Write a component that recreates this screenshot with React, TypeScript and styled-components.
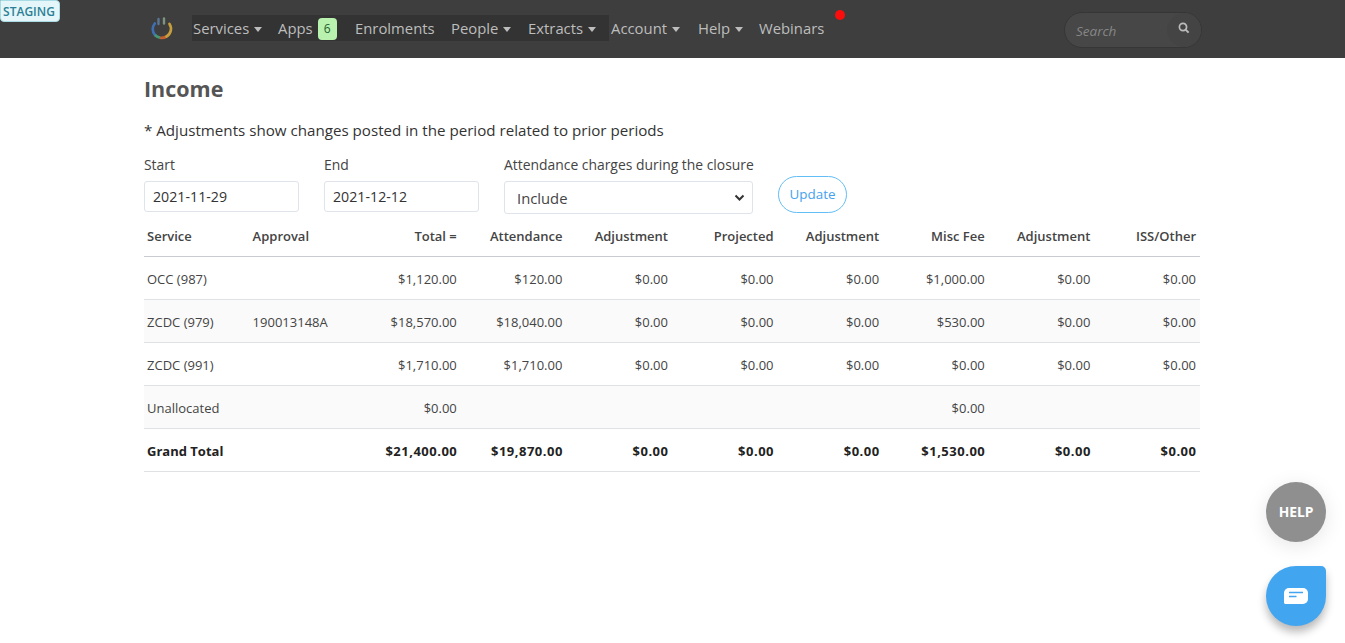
import React from "react";
import styled, { createGlobalStyle } from "styled-components";

const Global = createGlobalStyle`
  html, body { margin: 0; padding: 0; background: #fff; }
  body { font-family: "Open Sans", "Noto Sans", "Liberation Sans", sans-serif; color: #333; overflow: hidden; }
`;

const Page = styled.div`
  position: relative;
  width: 1345px;
  height: 643px;
  overflow: hidden;
`;

const Header = styled.header`
  height: 58px;
  background: #3e3e3e;
  display: flex;
  align-items: flex-start;
  padding-left: 149px;
  box-sizing: border-box;
`;

const StagingBadge = styled.div`
  position: absolute;
  left: 0;
  top: 0;
  width: 60px;
  height: 22px;
  box-sizing: border-box;
  padding-right: 2px;
  background: #e4f6f9;
  border: 1px solid #a9dbe4;
  border-radius: 0 4px 4px 4px;
  color: #2b8096;
  font-size: 12px;
  font-weight: 600;
  line-height: 21px;
  text-align: center;
  white-space: nowrap;
`;

const LogoBox = styled.div`
  width: 26px;
  height: 28px;
  margin-top: 15px;
  margin-right: 17px;
`;

const NavStrip = styled.nav`
  display: flex;
  margin-top: 15px;
  background: #333;
  height: 26px;
  padding-left: 1px;
  width: 417px;
  box-sizing: border-box;
`;

const NavRest = styled.nav`
  display: flex;
  margin-top: 15px;
  margin-left: 2px;
  height: 26px;
`;

const NavItem = styled.a<{ $w: number }>`
  display: flex;
  align-items: center;
  width: ${(p) => p.$w}px;
  height: 26px;
  color: #bdbdbd;
  font-size: 14.85px;
  white-space: nowrap;
`;

const Caret = styled.span`
  display: inline-block;
  width: 0;
  height: 0;
  margin-left: 5px;
  margin-top: 2px;
  border-left: 4px solid transparent;
  border-right: 4px solid transparent;
  border-top: 5px solid #bdbdbd;
`;

const AppsBadge = styled.span`
  display: inline-block;
  width: 19px;
  height: 22px;
  margin-left: 5px;
  margin-top: 2px;
  border-radius: 4px;
  background: #b9f2ae;
  color: #1d5e2c;
  font-size: 12px;
  line-height: 22px;
  text-align: center;
`;

const RedDot = styled.span`
  position: absolute;
  left: 835px;
  top: 10px;
  width: 10px;
  height: 10px;
  border-radius: 50%;
  background: #fb0d0d;
`;

const SearchBox = styled.div`
  position: absolute;
  left: 1064px;
  top: 12px;
  width: 138px;
  height: 36px;
  box-sizing: border-box;
  border-radius: 18px;
  background: #474747;
  border: 1px solid #363636;
  display: flex;
  align-items: center;
  justify-content: space-between;
  padding: 2px 0 0 11px;
  color: #868686;
  font-size: 13.5px;
  font-style: italic;
`;

const SearchIconWrap = styled.span`
  width: 34px;
  height: 34px;
  margin-top: -2px;
  border-radius: 50%;
  background: #444;
  display: flex;
  align-items: center;
  justify-content: center;
  padding: 0 0 4px 0;
  box-sizing: border-box;
`;

const Main = styled.main`
  width: 1056px;
  margin-left: 144px;
`;

const Title = styled.h1`
  margin: 16px 0 0;
  height: 29px;
  font-size: 21.5px;
  line-height: 29px;
  font-weight: 700;
  color: #555;
`;

const Note = styled.p`
  margin: 16px 0 0;
  height: 22px;
  font-size: 15.15px;
  line-height: 22px;
  color: #333;
`;

const FormRow = styled.form`
  display: flex;
  align-items: flex-start;
  margin-top: 15px;
  height: 59px;
`;

const Field = styled.div<{ $w: number; $mr: number }>`
  width: ${(p) => p.$w}px;
  margin-right: ${(p) => p.$mr}px;
`;

const Label = styled.label`
  display: block;
  font-size: 13.9px;
  line-height: 18px;
  color: #444;
  font-weight: 500;
  white-space: nowrap;
`;

const DateInput = styled.div`
  margin-top: 7px;
  height: 31px;
  box-sizing: border-box;
  border: 1px solid #dfe3ea;
  border-radius: 3px;
  padding-left: 8px;
  font-size: 14.2px;
  line-height: 29px;
  color: #333;
`;

const Select = styled.div`
  margin-top: 7px;
  height: 33px;
  box-sizing: border-box;
  border: 1px solid #dfe3ea;
  border-radius: 3px;
  padding: 0 7px 0 12px;
  font-size: 14.8px;
  color: #444;
  display: flex;
  align-items: center;
  justify-content: space-between;
`;

const UpdateButton = styled.button`
  margin-top: 20px;
  width: 69px;
  height: 37px;
  padding: 0 0 2px;
  box-sizing: border-box;
  background: #fff;
  border: 1px solid #63bdf6;
  border-radius: 19px;
  color: #43a2ee;
  font-family: inherit;
  font-size: 13.4px;
`;

const Table = styled.table`
  width: 1056px;
  border-collapse: collapse;
  table-layout: fixed;
`;

const Th = styled.th<{ $left?: boolean }>`
  height: 41px;
  padding: 1px 4px 0 3px;
  box-sizing: border-box;
  border-bottom: 1px solid #c9cbd3;
  text-align: ${(p) => (p.$left ? "left" : "right")};
  font-size: 13px;
  font-weight: 600;
  color: #444;
  white-space: nowrap;
`;

const Tr = styled.tr<{ $alt?: boolean }>`
  background: ${(p) => (p.$alt ? "#fafafa" : "#fff")};
`;

const Td = styled.td<{ $left?: boolean; $bold?: boolean }>`
  height: 43px;
  padding: 3px ${(p) => (p.$bold && !p.$left ? "3.5px" : "4px")} 0 3px;
  box-sizing: border-box;
  border-bottom: 1px solid #dfe1e5;
  text-align: ${(p) => (p.$left ? "left" : "right")};
  font-size: 13px;
  font-weight: ${(p) => (p.$bold ? 700 : 400)};
  letter-spacing: ${(p) => (p.$bold && !p.$left ? "0.5px" : "0")};
  color: ${(p) => (p.$bold ? "#222" : "#444")};
  white-space: nowrap;
`;

const HelpButton = styled.div`
  position: absolute;
  left: 1266px;
  top: 482px;
  width: 60px;
  height: 60px;
  border-radius: 50%;
  background: #8f8f8f;
  box-shadow: 0 4px 20px rgba(0, 0, 0, 0.1);
  color: #fff;
  font-size: 13.8px;
  font-weight: 700;
  line-height: 59px;
  text-align: center;
`;

const ChatButton = styled.div`
  position: absolute;
  left: 1266px;
  top: 566px;
  width: 60px;
  height: 60px;
  border-radius: 30px 5px 30px 30px;
  background: #42a5f0;
  box-shadow: 0 6px 8px rgba(0, 0, 0, 0.28);
  display: flex;
  align-items: center;
  justify-content: center;
`;

const headers = ["Service", "Approval", "Total =", "Attendance", "Adjustment", "Projected", "Adjustment", "Misc Fee", "Adjustment", "ISS/Other"];
const z = "$0.00";
const rows = [
  ["OCC (987)", "", "$1,120.00", "$120.00", z, z, z, "$1,000.00", z, z],
  ["ZCDC (979)", "190013148A", "$18,570.00", "$18,040.00", z, z, z, "$530.00", z, z],
  ["ZCDC (991)", "", "$1,710.00", "$1,710.00", z, z, z, z, z, z],
  ["Unallocated", "", z, "", "", "", "", z, "", ""],
];
const total = ["Grand Total", "", "$21,400.00", "$19,870.00", z, z, z, "$1,530.00", z, z];

const Logo = () => (
  <svg width="26" height="28" viewBox="0 0 26 28" opacity="0.88">
    <g fill="none" strokeWidth="2.7">
      <path d="M5.8 8.5 A8.8 8.8 0 0 0 6 20" stroke="#3f76c4" strokeLinecap="round" />
      <path d="M6 20 A8.8 8.8 0 0 0 11 22.6" stroke="#4aa37a" />
      <path d="M11 22.6 A8.8 8.8 0 0 0 17.5 21.5" stroke="#d4652f" />
      <path d="M17.5 21.5 A8.8 8.8 0 0 0 20.5 9" stroke="#d9ac3c" strokeLinecap="round" />
    </g>
    <path d="M9.5 4 V9" stroke="#5d7f9e" strokeWidth="2.4" strokeLinecap="round" />
    <path d="M15 3.5 V8.5" stroke="#86a08a" strokeWidth="2.4" strokeLinecap="round" />
  </svg>
);

export default function App() {
  return (
    <Page>
      <Global />
      <Header>
        <LogoBox>
          <Logo />
        </LogoBox>
        <NavStrip>
          <NavItem $w={85}>Services<Caret /></NavItem>
          <NavItem $w={77}>Apps<AppsBadge>6</AppsBadge></NavItem>
          <NavItem $w={96}>Enrolments</NavItem>
          <NavItem $w={77}>People<Caret /></NavItem>
          <NavItem $w={80}>Extracts<Caret /></NavItem>
        </NavStrip>
        <NavRest>
          <NavItem $w={87}>Account<Caret /></NavItem>
          <NavItem $w={61}>Help<Caret /></NavItem>
          <NavItem $w={70}>Webinars</NavItem>
        </NavRest>
      </Header>
      <StagingBadge>STAGING</StagingBadge>
      <RedDot />
      <SearchBox>
        Search
        <SearchIconWrap>
          <svg width="12" height="12" viewBox="0 0 12 12">
            <circle cx="5" cy="5" r="3.6" fill="none" stroke="#bbb" strokeWidth="1.7" />
            <path d="M7.6 7.6 L10.6 10.6" stroke="#bbb" strokeWidth="2" />
          </svg>
        </SearchIconWrap>
      </SearchBox>
      <Main>
        <Title>Income</Title>
        <Note>* Adjustments show changes posted in the period related to prior periods</Note>
        <FormRow>
          <Field $w={155} $mr={25}>
            <Label>Start</Label>
            <DateInput>2021-11-29</DateInput>
          </Field>
          <Field $w={155} $mr={25}>
            <Label>End</Label>
            <DateInput>2021-12-12</DateInput>
          </Field>
          <Field $w={249} $mr={25}>
            <Label>Attendance charges during the closure</Label>
            <Select>
              Include
              <svg width="11" height="8" viewBox="0 0 11 8">
                <path d="M1.5 1.5 L5.5 5.5 L9.5 1.5" fill="none" stroke="#333" strokeWidth="2" />
              </svg>
            </Select>
          </Field>
          <UpdateButton type="button">Update</UpdateButton>
        </FormRow>
        <Table>
          <thead>
            <tr>
              {headers.map((h, i) => (
                <Th key={i} $left={i < 2}>{h}</Th>
              ))}
            </tr>
          </thead>
          <tbody>
            {rows.map((r, ri) => (
              <Tr key={ri} $alt={ri % 2 === 1}>
                {r.map((c, i) => (
                  <Td key={i} $left={i < 2}>{c}</Td>
                ))}
              </Tr>
            ))}
            <Tr>
              {total.map((c, i) => (
                <Td key={i} $left={i < 2} $bold>{c}</Td>
              ))}
            </Tr>
          </tbody>
        </Table>
      </Main>
      <HelpButton>HELP</HelpButton>
      <ChatButton>
        <svg width="24" height="16" viewBox="0 0 24 16">
          <path d="M5 0 H19 A5 5 0 0 1 24 5 V11 A5 5 0 0 1 19 16 H1 L0 15 V5 A5 5 0 0 1 5 0 Z" fill="#fff" />
          <path d="M5 4.5 H19 M5 8.5 H12.5" stroke="#42a5f0" strokeWidth="1.4" />
        </svg>
      </ChatButton>
    </Page>
  );
}
